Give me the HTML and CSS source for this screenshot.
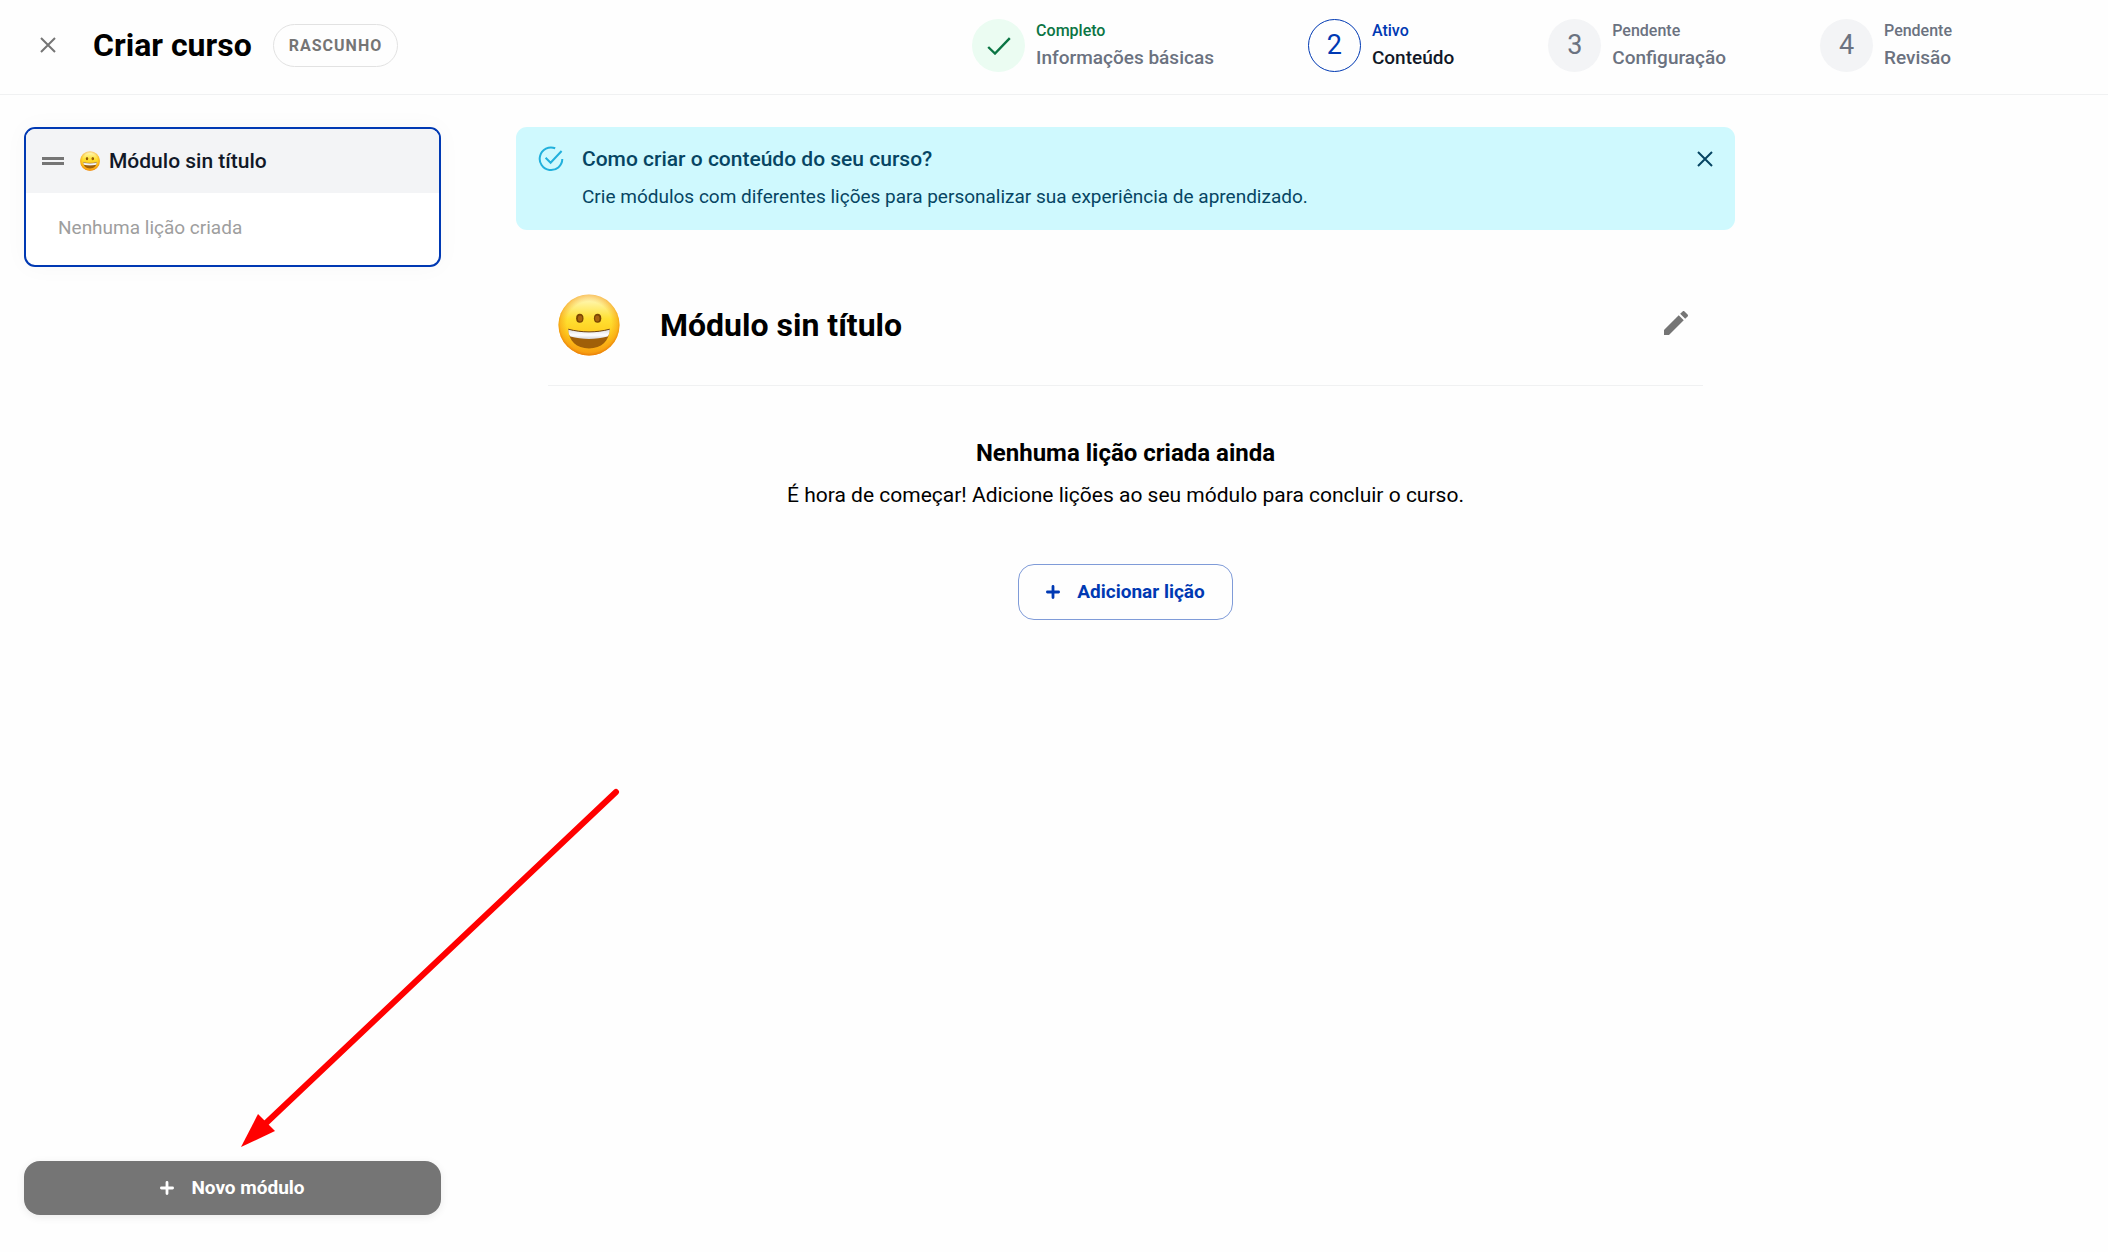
FILE: index.html
```html
<!DOCTYPE html>
<html lang="pt-BR">
<head>
    <meta charset="UTF-8">
    <meta name="viewport" content="width=device-width, initial-scale=1.0">
    <title>Criar curso</title>
    <link rel="stylesheet" href="styles.css">
</head>
<body>

    <!-- Shared icons -->
    <svg class="sprite" aria-hidden="true">
        <defs>
            <linearGradient id="faceFill" x1="0" y1="0" x2="0" y2="1">
                <stop offset="0" stop-color="#fffbd0"/>
                <stop offset="0.15" stop-color="#fff296"/>
                <stop offset="0.4" stop-color="#ffe032"/>
                <stop offset="0.7" stop-color="#ffc81a"/>
                <stop offset="1" stop-color="#f9a010"/>
            </linearGradient>
            <radialGradient id="faceEdge" cx="0.5" cy="0.48" r="0.52">
                <stop offset="0.7" stop-color="#f59a12" stop-opacity="0"/>
                <stop offset="0.9" stop-color="#f59a12" stop-opacity="0.5"/>
                <stop offset="1" stop-color="#e87807" stop-opacity="0.9"/>
            </radialGradient>
            <linearGradient id="teeth" x1="0" y1="0" x2="0" y2="1">
                <stop offset="0" stop-color="#d9dade"/>
                <stop offset="0.6" stop-color="#ffffff"/>
                <stop offset="1" stop-color="#d4d4d8"/>
            </linearGradient>
        </defs>
        <symbol id="emoji" viewBox="0 0 62 62">
            <circle cx="31" cy="31" r="30.5" fill="url(#faceFill)"/>
            <circle cx="31" cy="31" r="30.5" fill="url(#faceEdge)"/>
            <ellipse cx="21.8" cy="24.2" rx="3.7" ry="4.5" fill="#7a4602"/>
            <ellipse cx="39.6" cy="24.2" rx="3.7" ry="4.5" fill="#7a4602"/>
            <ellipse cx="22.1" cy="24.6" rx="2.2" ry="3" fill="#a86410"/>
            <ellipse cx="39.3" cy="24.6" rx="2.2" ry="3" fill="#a86410"/>
            <path d="M10.3 35.2C24 38.8 38 38.8 51.7 35.2C51.2 47 43.6 54.4 31 54.4S10.8 47 10.3 35.2Z" fill="#a05f08"/>
            <path d="M10.3 35.2C24 38.8 38 38.8 51.7 35.2C51.6 39 51 41 49.6 42.6C38 45.8 24 45.8 12.4 42.6C11 41 10.4 39 10.3 35.2Z" fill="url(#teeth)"/>
            <path d="M10.3 35.2C24 38.8 38 38.8 51.7 35.2" fill="none" stroke="#6f4410" stroke-width="1"/>
        </symbol>
        <symbol id="close" viewBox="0 0 16 16">
            <path d="M1 1L15 15M15 1L1 15" fill="none" stroke="currentColor" stroke-width="2"/>
        </symbol>
        <symbol id="plus" viewBox="0 0 14 14">
            <path d="M7 1.4V12.6M1.4 7H12.6" fill="none" stroke="currentColor" stroke-width="2.8" stroke-linecap="round"/>
        </symbol>
    </svg>

    <header class="header">
        <button type="button" class="icon-button close-button" aria-label="Fechar">
            <svg class="icon-close"><use href="#close"/></svg>
        </button>
        <h1 class="title">Criar curso</h1>
        <span class="badge">RASCUNHO</span>

        <ol class="steps">
            <li class="step done">
                <span class="step-circle">
                    <svg class="icon-check" viewBox="0 0 24 18"><path d="M1.2 10L8 16.5L22.8 1.2" fill="none" stroke="currentColor" stroke-width="2.4"/></svg>
                </span>
                <span class="step-text">
                    <span class="step-status">Completo</span>
                    <span class="step-name">Informações básicas</span>
                </span>
            </li>
            <li class="step active" aria-current="step">
                <span class="step-circle">2</span>
                <span class="step-text">
                    <span class="step-status">Ativo</span>
                    <span class="step-name">Conteúdo</span>
                </span>
            </li>
            <li class="step">
                <span class="step-circle">3</span>
                <span class="step-text">
                    <span class="step-status">Pendente</span>
                    <span class="step-name">Configuração</span>
                </span>
            </li>
            <li class="step">
                <span class="step-circle">4</span>
                <span class="step-text">
                    <span class="step-status">Pendente</span>
                    <span class="step-name">Revisão</span>
                </span>
            </li>
        </ol>
    </header>

    <div class="layout">
        <aside class="sidebar">
            <div class="module-list">
                <div class="module-card">
                    <div class="module-header">
                        <svg class="icon-drag" viewBox="0 0 22 8"><path d="M0 0H22V3H0ZM0 5H22V8H0Z" fill="currentColor"/></svg>
                        <svg class="emoji-small"><use href="#emoji"/></svg>
                        <span class="module-name">Módulo sin título</span>
                    </div>
                    <p class="module-empty">Nenhuma lição criada</p>
                </div>
            </div>
            <button type="button" class="button new-module">
                <svg class="icon-plus"><use href="#plus"/></svg>
                Novo módulo
            </button>
        </aside>

        <main class="content">
            <section class="banner">
                <svg class="icon-info" viewBox="0 0 26 26">
                    <path d="M17.2 2.3A11.3 11.3 0 1 0 24.3 13" fill="none" stroke="currentColor" stroke-width="2"/>
                    <path d="M7.6 11.8L12.6 16.8L23.6 5" fill="none" stroke="currentColor" stroke-width="2"/>
                </svg>
                <div class="banner-text">
                    <h2 class="banner-title">Como criar o conteúdo do seu curso?</h2>
                    <p class="banner-description">Crie módulos com diferentes lições para personalizar sua experiência de aprendizado.</p>
                </div>
                <button type="button" class="icon-button banner-close" aria-label="Fechar aviso">
                    <svg class="icon-close"><use href="#close"/></svg>
                </button>
            </section>

            <section class="module">
                <div class="module-heading">
                    <svg class="emoji-large"><use href="#emoji"/></svg>
                    <h2 class="module-title">Módulo sin título</h2>
                    <button type="button" class="icon-button edit-button" aria-label="Editar módulo">
                        <svg class="icon-edit" viewBox="3 3 18 18"><path d="M3 17.25V21h3.75L17.81 9.94l-3.75-3.75L3 17.25zM20.71 7.04c.39-.39.39-1.02 0-1.41l-2.34-2.34c-.39-.39-1.02-.39-1.41 0l-1.83 1.83 3.75 3.75 1.83-1.83z" fill="currentColor"/></svg>
                    </button>
                </div>
                <div class="empty-state">
                    <h3 class="empty-title">Nenhuma lição criada ainda</h3>
                    <p class="empty-description">É hora de começar! Adicione lições ao seu módulo para concluir o curso.</p>
                    <button type="button" class="button add-lesson">
                        <svg class="icon-plus"><use href="#plus"/></svg>
                        Adicionar lição
                    </button>
                </div>
            </section>
        </main>
    </div>

    <!-- Arrow pointing at the new module button -->
    <svg class="arrow" viewBox="0 0 380 362" aria-hidden="true">
        <path d="M375 5L24 337" fill="none" stroke="#ff0000" stroke-width="6" stroke-linecap="round"/>
        <path d="M0 360L17 327L34 344Z" fill="#ff0000"/>
    </svg>

</body>
</html>
```
FILE: styles.css
```css
* {
    box-sizing: border-box;
}

body {
    font-family: Roboto, 'Liberation Sans', sans-serif;
    font-size: 19px;
    margin: 0;
    min-height: 100vh;
    display: flex;
    flex-direction: column;
    background: #fefefe;
    color: #000;
    position: relative;
}

h1, h2, h3, p, ol {
    margin: 0;
    padding: 0;
}

svg {
    display: block;
    flex: none;
}

.sprite {
    position: absolute;
    width: 0;
    height: 0;
}

/* Buttons */
button {
    font-family: inherit;
    cursor: pointer;
}

.icon-button {
    display: flex;
    align-items: center;
    justify-content: center;
    padding: 8px;
    border: none;
    background: none;
}

.button {
    display: flex;
    align-items: center;
    justify-content: center;
    gap: 17px;
    font-size: 19px;
    font-weight: 700;
    line-height: 24px;
    border-radius: 16px;
}

.icon-close {
    width: 16px;
    height: 16px;
}

.icon-plus {
    width: 14px;
    height: 14px;
}

/* Header */
.header {
    display: flex;
    align-items: center;
    padding: 18px 156px 22px 32px;
    border-bottom: 1px solid #f0f1f2;
}

.close-button {
    color: #757575;
}

.title {
    font-size: 32px;
    line-height: 40px;
    font-weight: 700;
    margin-left: 29px;
}

.badge {
    margin-left: 21px;
    padding: 10px 15px;
    border: 1px solid #e2e2e2;
    border-radius: 22px;
    font-size: 16px;
    line-height: 21px;
    font-weight: 700;
    letter-spacing: 1px;
    color: #757575;
}

/* Steps */
.steps {
    display: flex;
    gap: 94px;
    margin-left: auto;
    list-style: none;
}

.step {
    display: flex;
    align-items: center;
    gap: 11px;
    color: #6b7280;
}

.step-circle {
    display: flex;
    align-items: center;
    justify-content: center;
    width: 53px;
    height: 53px;
    border-radius: 50%;
    background: #f3f4f6;
    font-size: 27px;
}

.step-text {
    display: flex;
    flex-direction: column;
    font-weight: 500;
}

.step-status {
    font-size: 16px;
    line-height: 26px;
}

.step-name {
    font-size: 19px;
    line-height: 28px;
}

.done .step-circle {
    background: #ebfcf2;
    color: #0b7544;
}

.done .step-status {
    color: #0b7544;
}

.active .step-circle {
    background: none;
    border: 1px solid #0039b3;
    color: #0039b3;
}

.active .step-status {
    color: #0039b3;
}

.active .step-name {
    color: #111827;
}

.icon-check {
    width: 24px;
    height: 18px;
    margin-top: 2px;
}

/* Page layout */
.layout {
    flex: 1;
    display: grid;
    grid-template-columns: 417px minmax(0, 1219px);
    gap: 75px;
    padding: 32px 24px 37px;
}

.sidebar {
    display: flex;
    flex-direction: column;
    justify-content: space-between;
}

.module-card {
    border: 2px solid #0039b3;
    border-radius: 11px;
    overflow: hidden;
    background: #fff;
    box-shadow: 0 0 24px rgba(0, 0, 0, 0.03);
}

.module-header {
    display: flex;
    align-items: center;
    padding: 18px 16px;
    background: #f3f4f6;
    color: #111827;
    font-size: 21px;
    line-height: 28px;
    font-weight: 500;
}

.icon-drag {
    width: 22px;
    height: 8px;
    color: #757575;
}

.emoji-small {
    width: 20px;
    height: 20px;
    margin: 0 9px 0 16px;
}

.module-empty {
    padding: 21px 32px 23px;
    line-height: 28px;
    color: #9e9e9e;
}

.new-module {
    padding: 15px;
    border: none;
    background: #757575;
    color: #fff;
    box-shadow: 0 2px 8px rgba(0, 0, 0, 0.08);
}

/* Banner */
.banner {
    display: flex;
    align-items: flex-start;
    padding: 16px 14px 19px 22px;
    border-radius: 11px;
    background: #cff9fe;
    color: #064563;
}

.icon-info {
    width: 26px;
    height: 26px;
    margin: 3px 18px 0 0;
    color: #22b0dc;
}

.banner-text {
    flex: 1;
}

.banner-title {
    font-size: 21px;
    line-height: 32px;
    font-weight: 500;
}

.banner-description {
    margin-top: 8px;
    line-height: 28px;
}

.banner-close {
    color: #064563;
}

/* Module */
.module {
    padding: 64px 32px 0;
}

.module-heading {
    display: flex;
    align-items: center;
    padding: 0 7px 29px 10px;
    border-bottom: 1px solid #f0f1f2;
}

.emoji-large {
    width: 62px;
    height: 62px;
}

.module-title {
    flex: 1;
    margin-left: 40px;
    font-size: 32px;
    line-height: 40px;
    font-weight: 700;
}

.edit-button {
    padding-bottom: 12px;
    color: #757575;
}

.icon-edit {
    width: 24px;
    height: 24px;
}

.empty-state {
    display: flex;
    flex-direction: column;
    align-items: center;
    padding-top: 51px;
    text-align: center;
}

.empty-title {
    font-size: 24px;
    line-height: 32px;
    font-weight: 700;
}

.empty-description {
    margin-top: 8px;
    font-size: 21px;
    line-height: 36px;
}

.add-lesson {
    margin-top: 51px;
    padding: 15px 27px;
    border: 1px solid #7f9bd8;
    background: none;
    color: #0039b3;
}

/* Arrow over the page */
.arrow {
    position: absolute;
    left: 241px;
    bottom: 103px;
    width: 380px;
    height: 362px;
    pointer-events: none;
}
```
